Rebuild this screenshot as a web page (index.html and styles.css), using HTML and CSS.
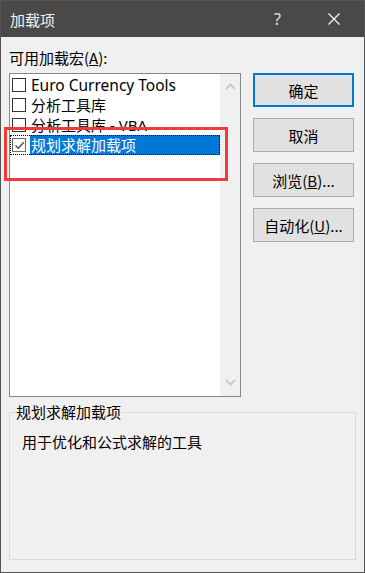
FILE: index.html
```html
<!DOCTYPE html>
<html lang="zh-CN">
<head>
<meta charset="utf-8">
<title>加载项</title>
<link rel="stylesheet" href="styles.css">
</head>
<body>
<div class="window">
  <div class="titlebar">
    <span class="title">加载项</span>
    <span class="help">?</span>
    <span class="close"><svg width="12" height="12" viewBox="0 0 12 12"><path d="M0.5 0.5 L11.5 11.5 M11.5 0.5 L0.5 11.5" stroke="#f2f2f2" stroke-width="1.3" fill="none"/></svg></span>
  </div>
  <div class="content">
    <div class="top">
      <div class="leftcol">
        <div class="label">可用加载宏(<u>A</u>):</div>
        <div class="listbox">
          <div class="items">
            <div class="item"><span class="cb"></span><span class="txt latin">Euro Currency Tools</span></div>
            <div class="item"><span class="cb"></span><span class="txt">分析工具库</span></div>
            <div class="item"><span class="cb"></span><span class="txt">分析工具库 - VBA</span></div>
            <div class="item selected"><span class="cb checked"><svg width="11" height="11" viewBox="0 0 11 11"><path d="M1.5 5.5 L4.2 8.3 L9.8 2.2" stroke="#4d4d4d" stroke-width="1.3" fill="none"/></svg></span><span class="txt">规划求解加载项</span></div>
          </div>
          <div class="scrollbar">
            <svg class="arrow" width="11" height="7" viewBox="0 0 11 7"><path d="M1 6 L5.5 1.5 L10 6" stroke="#c2c2c2" stroke-width="1.6" fill="none"/></svg>
            <svg class="arrow" width="11" height="7" viewBox="0 0 11 7"><path d="M1 1 L5.5 5.5 L10 1" stroke="#c2c2c2" stroke-width="1.6" fill="none"/></svg>
          </div>
        </div>
      </div>
      <div class="buttons">
        <button class="btn default">确定</button>
        <button class="btn">取消</button>
        <button class="btn">浏览(<u>B</u>)...</button>
        <button class="btn">自动化(<u>U</u>)...</button>
      </div>
    </div>
    <fieldset class="group">
      <legend>规划求解加载项</legend>
      <div class="desc">用于优化和公式求解的工具</div>
    </fieldset>
  </div>
  <div class="annotation"></div>
</div>
</body>
</html>
```

FILE: styles.css
```css
* { box-sizing: border-box; }
html, body { margin: 0; padding: 0; }
body {
  font-family: "Noto Sans", "Noto Sans CJK SC", sans-serif;
  font-size: 15px;
  color: #000;
  background: #f0f0f0;
}
.window {
  position: relative;
  width: 365px;
  height: 573px;
  border: 1px solid #555555;
  background: #f0f0f0;
  display: flex;
  flex-direction: column;
}
.titlebar {
  height: 36px;
  background: #4a4947;
  color: #f2f2f2;
  display: flex;
  align-items: center;
  padding-left: 9px;
  font-family: "Noto Sans CJK SC", sans-serif;
  font-size: 15px;
}
.title { flex: 1; }
.help {
  width: 42px;
  font-family: "Noto Sans", sans-serif;
  font-size: 16px;
  color: #e0e0e0;
}
.close {
  width: 48px;
  display: flex;
  align-items: center;
  padding-left: 12px;
}
.content {
  flex: 1;
  display: flex;
  flex-direction: column;
  padding: 11px 8px 12px 8px;
}
.top { display: flex; gap: 12px; }
.leftcol { display: flex; flex-direction: column; gap: 5px; }
.label {
  height: 20px;
  line-height: 20px;
  font-family: "Noto Sans CJK SC", sans-serif;
}
.listbox {
  width: 232px;
  height: 324px;
  border: 1px solid #828790;
  background: #fff;
  display: flex;
}
.items { flex: 1; padding-top: 1px; }
.item {
  height: 20px;
  display: flex;
  align-items: center;
  padding-left: 2px;
}
.cb {
  width: 14px;
  height: 14px;
  border: 1px solid #333;
  background: #fff;
  margin-right: 4px;
  display: flex;
  align-items: center;
  justify-content: center;
}
.cb.checked { border-color: #6a6a6a; }
.txt {
  height: 20px;
  line-height: 20px;
  padding: 0 1px;
  flex: 1;
  white-space: nowrap;
}
.txt.latin { font-size: 15.5px; }
.item.selected {
  outline: 1px dotted #000;
  outline-offset: -1px;
}
.item.selected .txt {
  background: #0078d7;
  color: #fff;
}
.scrollbar {
  width: 20px;
  background: #f0f0f0;
  display: flex;
  flex-direction: column;
  justify-content: space-between;
  align-items: center;
  padding: 9px 0 10px 0;
}
.buttons { display: flex; flex-direction: column; gap: 11px; padding-top: 25px; }
.btn {
  width: 101px;
  height: 34px;
  border: 1px solid #adadad;
  background: #e1e1e1;
  font-family: "Noto Sans CJK SC", sans-serif;
  font-size: 15px;
  color: #000;
  padding: 0;
}
.btn.default { border: 2px solid #0078d7; }
.group {
  flex: 1;
  margin: 7px 0 0 0;
  border: 1px solid #d9d9d9;
  padding: 0 6px;
}
.group legend {
  padding: 0;
  line-height: 16px;
  font-family: "Noto Sans CJK SC", sans-serif;
}
.desc {
  margin-top: 12px;
  padding-left: 6px;
  line-height: 20px;
  font-family: "Noto Sans CJK SC", sans-serif;
}
.annotation {
  position: absolute;
  left: 3px;
  top: 126px;
  width: 224px;
  height: 54px;
  border: 3px solid #ee3b3b;
}
```
